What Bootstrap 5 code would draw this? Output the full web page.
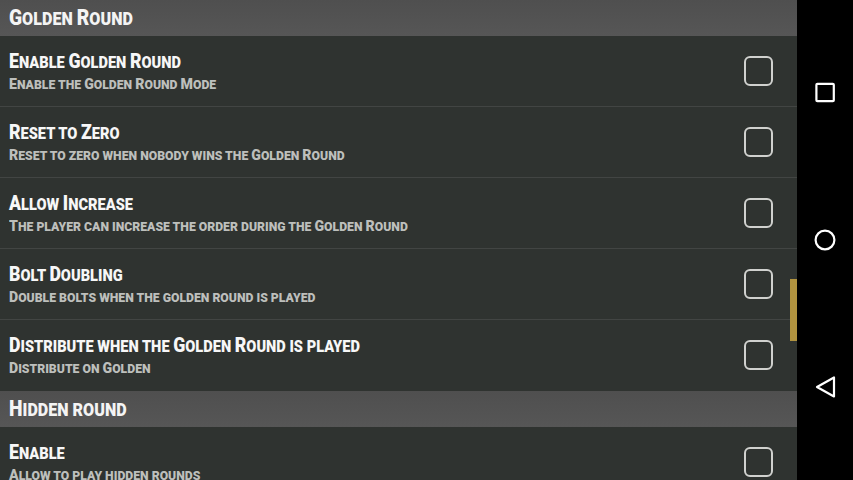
<!DOCTYPE html>
<html lang="en">

<head>
    <meta charset="UTF-8">
    <meta name="viewport" content="width=device-width, initial-scale=1.0">
    <title>Golden Round settings</title>
    <link href="https://cdn.jsdelivr.net/npm/bootstrap@5.3.0/dist/css/bootstrap.min.css" rel="stylesheet">
    <style>
        html, body {
            height: 480px;
            overflow: hidden;
            background-color: #000;
        }

        .screen {
            height: 480px;
            font-family: Roboto, "Liberation Sans", sans-serif;
            font-weight: 900;
            text-transform: uppercase;
            white-space: nowrap;
        }

        .settings {
            width: 797px;
            background-color: #2f3330;
            overflow: hidden;
        }

        .group-head {
            height: 36px;
            padding-left: 9px;
            background: linear-gradient(#4f4f4f, #565656);
            color: #f4f4f4;
            font-size: 18px;
            line-height: 36px;
        }

        .group-head .cap-letter {
            font-size: 21.5px;
        }

        .group-head div {
            transform: scaleX(.895);
            transform-origin: left center;
        }

        .pref-row {
            height: 71px;
            flex: none;
            padding: 13px 24px 0 9px;
            border-bottom: 1px solid #424543;
        }

        .pref-row.no-line {
            border-bottom: 0;
        }

        .pref-title {
            color: #f7f7f7;
            font-size: 16.5px;
            line-height: 25px;
            transform: scaleX(.885);
            transform-origin: left center;
        }

        .pref-title .cap-letter {
            font-size: 20px;
        }

        .pref-sub {
            color: #bdbfbc;
            font-size: 12.8px;
            line-height: 18px;
            transform: scaleX(.955);
            transform-origin: left center;
        }

        .pref-sub .cap-letter {
            font-size: 14.8px;
        }

        .tick {
            flex: none;
            width: 29px;
            height: 30px;
            margin-top: 7px;
            border: 2px solid #d0d1ce;
            border-radius: 6px;
        }

        .softkeys {
            width: 56px;
            padding: 81px 0;
        }

        .scroll-thumb {
            top: 279px;
            left: 790px;
            width: 7px;
            height: 62px;
            background-color: #b1933f;
        }
    </style>
</head>

<body>
    <div class="screen d-flex position-relative">
        <div class="settings d-flex flex-column" id="pref-list"></div>
        <div class="scroll-thumb position-absolute"></div>
        <div class="softkeys d-flex flex-column justify-content-between align-items-center">
            <svg width="24" height="24" viewBox="0 0 24 24" fill="none" stroke="#fff" stroke-width="2.2">
                <rect x="3.4" y="2.8" width="17.4" height="17.4" rx="1"/>
            </svg>
            <svg width="24" height="24" viewBox="0 0 24 24" fill="none" stroke="#fff" stroke-width="2.2">
                <circle cx="12" cy="12" r="9.4"/>
            </svg>
            <svg width="24" height="24" viewBox="0 0 24 24" fill="none" stroke="#fff" stroke-width="2.2" stroke-linejoin="round">
                <path d="M21 2.5V21.5L4 12Z"/>
            </svg>
        </div>
    </div>

    <script>
        const prefs = [
            { head: "Golden Round" },
            { title: "Enable Golden Round", sub: "Enable the Golden Round Mode" },
            { title: "Reset to Zero", sub: "Reset to zero when nobody wins the Golden Round" },
            { title: "Allow Increase", sub: "The player can increase the order during the Golden Round" },
            { title: "Bolt Doubling", sub: "Double bolts when the golden round is played" },
            { title: "Distribute when the Golden Round is played", sub: "Distribute on Golden", last: true },
            { head: "Hidden round" },
            { title: "Enable", sub: "Allow to play hidden rounds", last: true },
        ];

        // the font has small caps: capitals one size up
        function caps(text) {
            return text.replace(/[A-Z]/g, "<span class=\"cap-letter\">$&</span>");
        }

        const list = document.getElementById("pref-list");
        prefs.forEach((p) => {
            const el = document.createElement("div");
            if (p.head) {
                el.className = "group-head flex-shrink-0";
                el.innerHTML = `<div>${caps(p.head)}</div>`;
            } else {
                el.className = "pref-row d-flex justify-content-between" + (p.last ? " no-line" : "");
                el.innerHTML = `
                    <div>
                        <div class="pref-title">${caps(p.title)}</div>
                        <div class="pref-sub">${caps(p.sub)}</div>
                    </div>
                    <div class="tick"></div>
                `;
            }
            list.appendChild(el);
        });
    </script>

    <script src="https://cdn.jsdelivr.net/npm/bootstrap@5.3.0/dist/js/bootstrap.bundle.min.js"></script>
</body>

</html>
